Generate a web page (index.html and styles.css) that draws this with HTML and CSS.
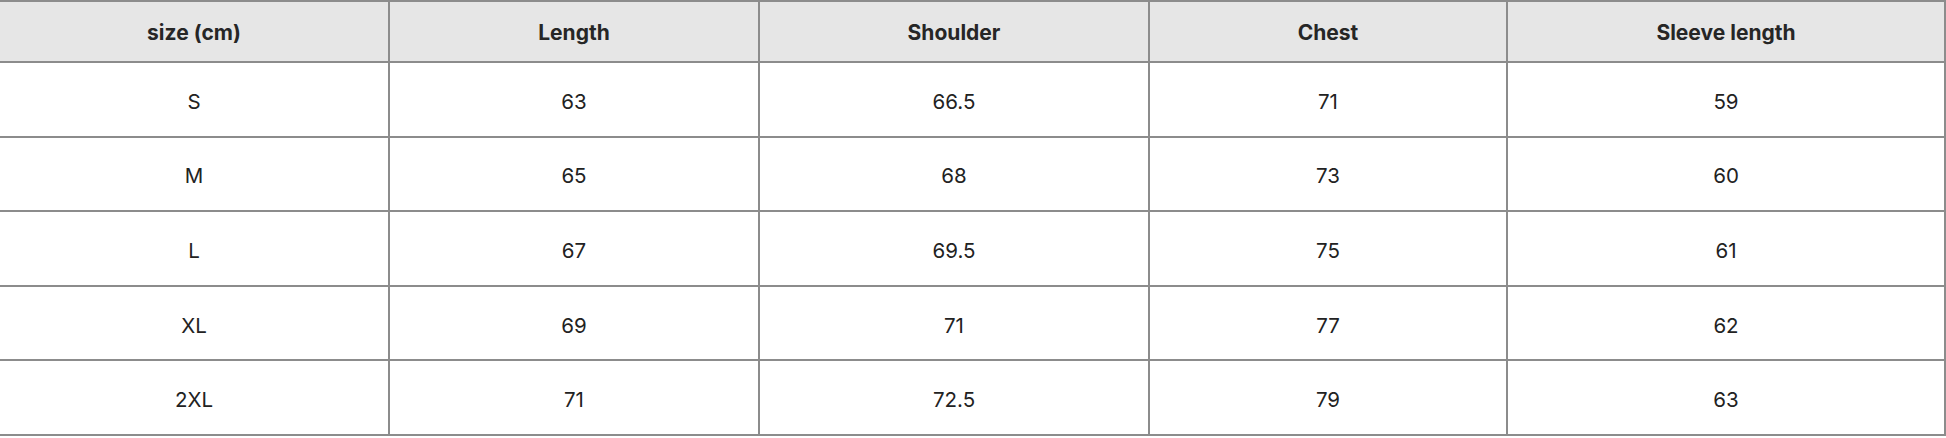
FILE: index.html
```html
<!DOCTYPE html>
<html>
<head>
<meta charset="utf-8">
<link rel="stylesheet" href="styles.css">
</head>
<body>
<table class="size-table">
  <colgroup>
    <col class="c1"><col class="c2"><col class="c3"><col class="c4"><col class="c5">
  </colgroup>
  <thead>
    <tr><th>size (cm)</th><th>Length</th><th>Shoulder</th><th>Chest</th><th>Sleeve length</th></tr>
  </thead>
  <tbody>
    <tr><td>S</td><td>63</td><td>66.5</td><td>71</td><td>59</td></tr>
    <tr><td>M</td><td>65</td><td>68</td><td>73</td><td>60</td></tr>
    <tr><td>L</td><td>67</td><td>69.5</td><td>75</td><td>61</td></tr>
    <tr><td>XL</td><td>69</td><td>71</td><td>77</td><td>62</td></tr>
    <tr><td>2XL</td><td>71</td><td>72.5</td><td>79</td><td>63</td></tr>
  </tbody>
</table>
</body>
</html>
```
FILE: styles.css
```css
html, body {
  margin: 0;
  padding: 0;
  background: #ffffff;
}
.size-table {
  width: 1946px;
  table-layout: fixed;
  border-collapse: separate;
  border-spacing: 0;
  border-top: 2px solid #8c8c8c;
  font-family: Inter, "Liberation Sans", sans-serif;
  color: #222222;
}
.c1 { width: 390px; }
.c2 { width: 370px; }
.c3 { width: 390px; }
.c4 { width: 358px; }
.c5 { width: 438px; }
.size-table th,
.size-table td {
  box-sizing: border-box;
  padding: 0;
  text-align: center;
  vertical-align: middle;
  border-right: 2px solid #8c8c8c;
  border-bottom: 2px solid #8c8c8c;
}
.size-table th {
  height: 61px;
  padding-top: 2px;
  background: #e6e6e6;
  font-size: 21px;
  font-weight: 650;
  color: #262626;
}
.size-table td {
  height: 74.6px;
  padding-top: 4px;
  font-size: 20.5px;
  font-weight: 400;
}
```
